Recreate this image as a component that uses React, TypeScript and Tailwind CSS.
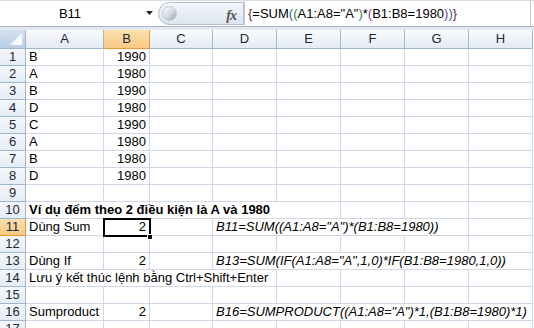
import React from "react";

type Cell = {
  text?: string;
  span?: number;
  right?: boolean;
  bold?: boolean;
  italic?: boolean;
};

const cols = ["A", "B", "C", "D", "E", "F", "G", "H"];

const dataRows: Cell[][] = [
  [{ text: "B" }, { text: "1990", right: true }, {}, {}, {}, {}, {}, {}],
  [{ text: "A" }, { text: "1980", right: true }, {}, {}, {}, {}, {}, {}],
  [{ text: "B" }, { text: "1990", right: true }, {}, {}, {}, {}, {}, {}],
  [{ text: "D" }, { text: "1980", right: true }, {}, {}, {}, {}, {}, {}],
  [{ text: "C" }, { text: "1990", right: true }, {}, {}, {}, {}, {}, {}],
  [{ text: "A" }, { text: "1980", right: true }, {}, {}, {}, {}, {}, {}],
  [{ text: "B" }, { text: "1980", right: true }, {}, {}, {}, {}, {}, {}],
  [{ text: "D" }, { text: "1980", right: true }, {}, {}, {}, {}, {}, {}],
  [{}, {}, {}, {}, {}, {}, {}, {}],
  [{ text: "Ví dụ đếm theo 2 điều kiện là A và 1980", span: 5, bold: true }, {}, {}, {}],
  [
    { text: "Dùng Sum" },
    { text: "2", right: true },
    {},
    { text: 'B11=SUM((A1:A8="A")*(B1:B8=1980))', span: 4, italic: true },
    {},
  ],
  [{}, {}, {}, {}, {}, {}, {}, {}],
  [
    { text: "Dùng If" },
    { text: "2", right: true },
    {},
    { text: 'B13=SUM(IF(A1:A8="A",1,0)*IF(B1:B8=1980,1,0))', span: 5, italic: true },
  ],
  [{ text: "Lưu ý kết thúc lệnh bằng Ctrl+Shift+Enter", span: 4 }, {}, {}, {}, {}],
  [{}, {}, {}, {}, {}, {}, {}, {}],
  [
    { text: "Sumproduct" },
    { text: "2", right: true },
    {},
    { text: 'B16=SUMPRODUCT((A1:A8="A")*1,(B1:B8=1980)*1)', span: 5, italic: true },
  ],
  [{}, {}, {}, {}, {}, {}, {}, {}],
];

const spanClass: Record<number, string> = {
  1: "col-span-1",
  4: "col-span-4",
  5: "col-span-5",
};

const FormulaBar = () => (
  <div className="h-[27px] flex bg-white border-t border-b border-t-[#d5dde7] border-b-[#a7b3c2]">
    <div className="w-[158px] flex items-center relative">
      <span className="w-[140px] text-center text-[13px] text-black">B11</span>
      <svg className="absolute left-[146px] top-[10px]" width="8" height="5" viewBox="0 0 8 5">
        <path d="M0 0 H7 L3.5 4 Z" fill="#222" />
      </svg>
    </div>
    <div className="w-[86px] h-[23px] self-center rounded-l-full border border-[#aebccd] bg-gradient-to-b from-[#f3f6fa] to-[#dde5ef] flex items-center relative">
      <div className="ml-[3px] w-[15px] h-[15px] rounded-full bg-gradient-to-br from-[#ffffff] via-[#d8dde4] to-[#9aa3ad] border border-[#c3cbd5]" />
      <span className="absolute right-[7px] top-[2px] text-[14px] italic font-bold text-[#555] font-['Liberation_Serif',serif] tracking-[-1px]">
        fx
      </span>
    </div>
    <div className="flex-1 flex items-center pl-[3px] border-l border-[#c5ced9] text-[13px] text-black mr-[3px] border-r">
      <span className="text-[#7a1f3d]">{"{"}</span>
      <span>=SUM</span>
      <span className="text-[#2c5ba8]">(</span>
      <span className="text-[#2f8a3b]">(</span>
      <span>A1:A8="A"</span>
      <span className="text-[#2f8a3b]">)</span>
      <span>*</span>
      <span className="text-[#7b3fa0]">(</span>
      <span>B1:B8=1980</span>
      <span className="text-[#7b3fa0]">)</span>
      <span className="text-[#2c5ba8]">)</span>
      <span className="text-[#7a1f3d]">{"}"}</span>
    </div>
  </div>
);

const App = () => {
  return (
    <div className="w-[534px] h-[328px] overflow-hidden bg-white font-['Liberation_Sans',Arial,sans-serif] text-black">
      <FormulaBar />
      <div className="h-[3px] bg-[#e3e9f1]" />
      <div className="relative">
        <div className="grid grid-cols-[26px_78px_46px_63px_64px_64px_64px_64px_64px]">
          {/* corner */}
          <div className="h-[19px] border-r border-b border-[#9eb6ce] bg-gradient-to-b from-[#d4e1f0] to-[#b9cde4] relative">
            <svg className="absolute right-[3px] bottom-[3px]" width="12" height="12" viewBox="0 0 12 12">
              <defs>
                <linearGradient id="tri" x1="0" y1="0" x2="1" y2="1">
                  <stop offset="0" stopColor="#e9f0f8" />
                  <stop offset="1" stopColor="#ffffff" />
                </linearGradient>
              </defs>
              <path d="M12 0 V12 H0 Z" fill="url(#tri)" />
            </svg>
          </div>
          {cols.map((c) =>
            c === "B" ? (
              <div
                key={c}
                className="h-[19px] flex items-center justify-center text-[13px] border-r border-b border-[#f29536] bg-gradient-to-b from-[#fbe0b0] to-[#f9c982] text-[#1d2733]"
              >
                {c}
              </div>
            ) : (
              <div
                key={c}
                className="h-[19px] flex items-center justify-center text-[13px] border-r border-b border-[#9eb6ce] bg-gradient-to-b from-[#f9fbfd] to-[#e4ebf4] text-[#1d2733]"
              >
                {c}
              </div>
            )
          )}
          {dataRows.map((row, i) => {
            const n = i + 1;
            const active = n === 11;
            return (
              <React.Fragment key={n}>
                <div
                  className={
                    active
                      ? "h-[17px] flex items-center justify-center text-[13px] border-r border-b border-[#f29536] bg-gradient-to-b from-[#fbe0b0] to-[#f9c982] text-[#1d2733]"
                      : "h-[17px] flex items-center justify-center text-[13px] border-r border-b border-[#9eb6ce] bg-gradient-to-b from-[#f4f7fb] to-[#e6edf5] text-[#1d2733]"
                  }
                >
                  {n}
                </div>
                {row.map((cell, j) => (
                  <div
                    key={j}
                    className={[
                      "h-[17px] border-r border-b border-[#d0d7e5] text-[13px] leading-[16px] whitespace-nowrap overflow-hidden",
                      spanClass[cell.span ?? 1],
                      cell.right ? "text-right pr-[3px]" : "pl-[3px]",
                      cell.bold ? "font-bold" : "",
                      cell.italic ? "italic" : "",
                    ].join(" ")}
                  >
                    {cell.text}
                  </div>
                ))}
              </React.Fragment>
            );
          })}
        </div>
        {/* active cell B11 */}
        <div className="absolute left-[103px] top-[188px] w-[48px] h-[19px] border-2 border-black pointer-events-none" />
        <div className="absolute left-[147px] top-[204px] w-[6px] h-[6px] bg-black border border-white pointer-events-none" />
      </div>
    </div>
  );
};

export default App;
